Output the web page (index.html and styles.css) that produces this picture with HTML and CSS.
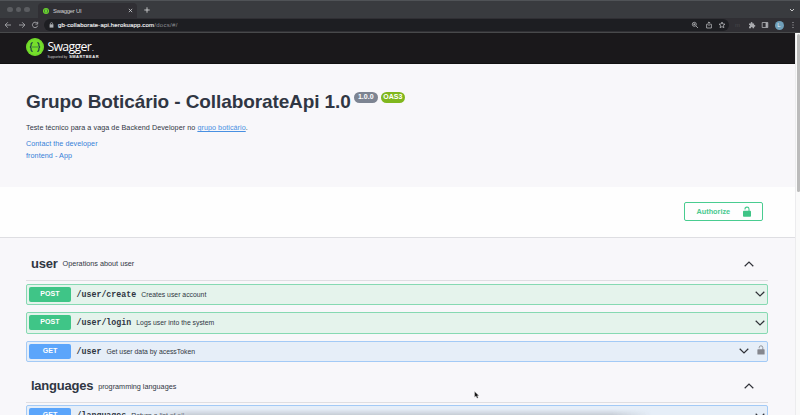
FILE: index.html
```html
<!DOCTYPE html>
<html lang="en">
<head>
<meta charset="utf-8">
<title>Swagger UI</title>
<link rel="stylesheet" href="styles.css">
</head>
<body>
<div class="tabs">
  <div class="lights"><i></i><i></i><i></i></div>
  <div class="tab">
    <svg class="favicon" viewBox="0 0 18 18"><circle cx="9" cy="9" r="9" fill="#6fd82c"/><path d="M7 4Q5 4 5 6.500Q5 9 3.500 9Q5 9 5 11.500Q5 14 7 14M11 4Q13 4 13 6.500Q13 9 14.500 9Q13 9 13 11.500Q13 14 11 14" fill="none" stroke="#173647" stroke-width="1.500"/></svg>
    <span>Swagger UI</span>
    <svg class="close" viewBox="0 0 6 6"><path d="M1 1L5 5M5 1L1 5" stroke="#dadbdd" stroke-width=".9"/></svg>
  </div>
  <svg class="plus" viewBox="0 0 6 6"><path d="M3 .3V5.700M.3 3H5.700" stroke="#d0d1d3" stroke-width=".9"/></svg>
  <svg class="tabmenu" viewBox="0 0 6 6"><path d="M1 2L3 4L5 2" fill="none" stroke="#c8c9cb"/></svg>
</div>
<div class="toolbar">
  <div class="nav">
    <svg viewBox="0 0 8 8"><path d="M7 4H1.300M3.800 1.300L1.100 4L3.800 6.700"/></svg>
    <svg viewBox="0 0 8 8"><path d="M1 4H6.700M4.200 1.300L6.900 4L4.200 6.700"/></svg>
    <svg viewBox="0 0 8 8"><path d="M6.200 2.200A2.700 2.700 0 1 0 6.700 4.700M6.700 .8V3.100H4.400"/></svg>
  </div>
  <div class="address">
    <svg class="secure" viewBox="0 0 5 6"><path d="M1.400 2.500V1.700a1.100 1.100 0 0 1 2.200 0v.8" fill="none" stroke="#aeb0b4" stroke-width=".7"/><path d="M.6 2.300H4.400V5.600H.6z" fill="#aeb0b4"/></svg>
    <span class="url"><b>gb-collaborate-api.herokuapp.com</b>/docs/#/</span>
    <div class="actions">
      <svg viewBox="0 0 8 8"><circle cx="3.300" cy="3.300" r="2"/><path d="M4.900 4.900L7 7M2.300 3.300H4.300M3.300 2.300V4.300"/></svg>
      <svg viewBox="0 0 8 8"><path d="M2.800 3.300H1.600V7H6.400V3.300H5.200M4 5V1M2.700 2.200L4 .9L5.300 2.200"/></svg>
      <svg viewBox="0 0 8 8"><path d="M4 1L4.800 3L7 3.200L5.400 4.600L5.900 6.700L4 5.600L2.100 6.700L2.600 4.600L1 3.200L3.200 3z"/></svg>
    </div>
  </div>
  <div class="extensions">
    <span class="dim">m</span>
    <svg viewBox="0 0 8 8"><path class="solid" d="M1 2.400H2.700V1.900a.9.900 0 0 1 1.800 0v.5H6.100V4h.4a.8.800 0 0 1 0 1.700h-.4V7.200H4.600V6.800a.8.800 0 0 0-1.600 0v.4H1V5.500h.5a.8.800 0 0 0 0-1.500H1z"/></svg>
    <svg viewBox="0 0 8 8"><path d="M1.200 1.500H6.800V6.500H1.200z"/><path class="solid" d="M4.600 1.500H6.800V6.500H4.600z"/></svg>
    <span class="avatar">L</span>
    <svg viewBox="0 0 8 8"><path class="solid" d="M3.500 1h1v1h-1zM3.500 3.500h1v1h-1zM3.500 6h1v1h-1z"/></svg>
  </div>
</div>
<div class="viewport">
  <main>
    <header class="topbar">
      <svg class="mark" viewBox="0 0 18 18"><circle cx="9" cy="9" r="9" fill="#75df2b"/><circle cx="9" cy="9" r="8.100" fill="none" stroke="#67c928" stroke-width=".5"/><path d="M6.800 4.800Q5 4.600 5.100 6.600Q5.200 9 3.800 9Q5.200 9 5.100 11.400Q5 13.400 6.800 13.200M11.200 4.800Q13 4.600 12.900 6.600Q12.800 9 14.200 9Q12.800 9 12.900 11.400Q13 13.400 11.200 13.200" fill="none" stroke="#173647" stroke-width="1.100"/><path d="M6.500 8.500h1v1h-1zM8.500 8.500h1v1h-1zM10.500 8.500h1v1h-1z" fill="#173647"/></svg>
      <div class="brand">
        <div class="brand-name">Swagger<small>.</small></div>
        <div class="support"><span>Supported by</span> <b>SMARTBEAR</b></div>
      </div>
    </header>
    <section class="info">
      <h1><span class="title-text">Grupo Boticário - CollaborateApi 1.0</span><span class="pill">1.0.0</span><span class="pill oas">OAS3</span></h1>
      <p class="description">Teste técnico para a vaga de Backend Developer no <a href="#">grupo boticário</a>.</p>
      <a class="link" href="#">Contact the developer</a>
      <a class="link" href="#">frontend - App</a>
    </section>
    <section class="auth">
      <button><span>Authorize</span><svg viewBox="0 0 10 12"><path d="M3 3.600V3.200a2 2 0 0 1 4-.2v2" fill="none" stroke="#49cc90" stroke-width="1.100"/><rect x="1" y="4.800" width="8" height="6" rx=".8" fill="#3fc486"/></svg></button>
    </section>
    <section class="operations">
      <div class="tag"><h2>user</h2><span>Operations about user</span><svg class="chev" viewBox="0 0 10 6"><path d="M.7 5.200L5 1L9.300 5.200"/></svg></div>
      <div class="op post"><b class="method">POST</b><code>/user/create</code><span>Creates user account</span><svg class="chev" viewBox="0 0 10 6"><path d="M.7 .8L5 5L9.300 .8"/></svg></div>
      <div class="op post"><b class="method">POST</b><code>/user/login</code><span>Logs user into the system</span><svg class="chev" viewBox="0 0 10 6"><path d="M.7 .8L5 5L9.300 .8"/></svg></div>
      <div class="op get"><b class="method">GET</b><code>/user</code><span>Get user data by acessToken</span><svg class="chev" viewBox="0 0 10 6"><path d="M.7 .8L5 5L9.300 .8"/></svg><svg class="lock" viewBox="0 0 8 10"><path d="M2.200 3.300V2.700a1.800 1.800 0 0 1 3.600-.2V5" fill="none" stroke="#909298"/><rect x=".4" y="4.200" width="7.200" height="5.400" rx=".6" fill="#85878e"/></svg></div>
      <div class="tag second"><h2>languages</h2><span>programming languages</span><svg class="chev" viewBox="0 0 10 6"><path d="M.7 5.200L5 1L9.300 5.200"/></svg></div>
      <div class="op get"><b class="method">GET</b><code>/languages</code><span>Return a list of all</span><svg class="chev" viewBox="0 0 10 6"><path d="M.7 .8L5 5L9.300 .8"/></svg></div>
    </section>
  </main>
  <div class="scroll"><i></i></div>
</div>
<div class="shade"></div>
<svg class="cursor" viewBox="0 0 6 8"><path d="M.6 .5V6.200L2 5L3 7.300L4.200 6.800L3.300 4.700H5z" fill="#111" stroke="#ddd" stroke-width=".4"/></svg>
</body>
</html>
```
FILE: styles.css
```css
* { box-sizing: border-box; }
body { margin: 0; width: 800px; height: 415px; overflow: hidden; position: relative; background: #f8f7fa; color: #303643; font-family: "Liberation Sans", Arial, sans-serif; }
svg { display: block; flex: none; }
span, b, code, a, h2 { white-space: nowrap; }

.tabs { display: flex; height: 18px; background: #393b3f; border-top: 1px solid #505357; padding-left: 7px; align-items: center; }
.lights { display: flex; gap: 3px; width: 31px; }
.lights i { width: 5.500px; height: 5.500px; border-radius: 50%; background: #5b5d61; }
.tab { display: flex; align-items: center; width: 99px; height: 15px; align-self: flex-end; padding: 0 4px 0 5px; background: #302f34; border-radius: 4px 4px 0 0; color: #d1d2d5; font-size: 5.900px; letter-spacing: -.25px; }
.favicon { width: 6px; height: 6px; margin-right: 4px; }
.close { width: 5px; height: 5px; margin-left: auto; }
.plus { width: 6px; height: 6px; margin-left: 7px; }
.tabmenu { width: 6px; height: 6px; margin: 0 5px 0 auto; }

.toolbar { display: flex; align-items: center; height: 15px; background: #302f34; border-bottom: 1px solid #48494b; padding-left: 4px; }
.toolbar svg { fill: none; stroke: #b5b6ba; stroke-width: .8; }
.nav { display: flex; gap: 5.500px; width: 40px; }
.nav svg { width: 8px; height: 8px; }
.address { display: flex; align-items: center; width: 685px; height: 12px; background: #1d1e22; border-radius: 6px; padding: 0 3px 0 5px; }
.address .secure { width: 5px; height: 6px; margin-right: 4px; stroke: none; }
.url { font-size: 6px; color: #8c8e93; letter-spacing: .3px; }
.url b { color: #f0f0f2; font-weight: 400; letter-spacing: .16px; -webkit-text-stroke: .15px #f0f0f2; }
.actions { display: flex; gap: 5.500px; margin-left: auto; }
.actions svg { width: 8px; height: 8px; }
.extensions { display: flex; align-items: center; gap: 5.500px; padding-left: 6px; }
.extensions svg { width: 8px; height: 8px; }
.toolbar .solid { fill: #aaabaf; stroke: none; }
.dim { width: 7px; font-size: 6px; color: #47484b; }
.avatar { width: 9px; height: 9px; border-radius: 50%; background: #6f9fb9; color: #e5edf1; font-size: 6px; line-height: 9px; text-align: center; }

.viewport { display: flex; height: 382px; }
main { width: 795px; }
.scroll { width: 5px; background: #fafafa; border-left: 1px solid #ececee; }
.scroll i { display: block; width: 3px; height: 158px; margin: 1px 0 0 1px; border-radius: 2px; background: #bbb; }

.topbar { display: flex; height: 31px; padding: 5px 0 0 26px; background: #1a181b; border-bottom: 1px solid #111; }
.mark { width: 18px; height: 18px; }
.brand { padding-left: 3.500px; color: #fff; }
.brand-name { height: 16px; font: 12.300px/18px "Open Sans", sans-serif; letter-spacing: -.7px; }
.brand-name small { font-size: 7px; margin-left: 1px; }
.support { display: flex; align-items: center; gap: 2px; height: 5px; font-size: 3.300px; color: #ccc; }
.support b { font-size: 4px; letter-spacing: .48px; color: #f5f5f5; }

.info { height: 123px; padding: 28px 0 0 26px; }
h1 { display: flex; margin: 0; height: 23px; font-size: 19px; line-height: 20px; }
.title-text { width: 327.500px; letter-spacing: -.1px; }
.pill { width: 24.500px; height: 10.500px; margin-right: 2.500px; border-radius: 6px; background: #7d8492; color: #fff; font-size: 7px; line-height: 10.500px; text-align: center; }
.oas { background: #80b71d; }
.description { margin: 8px 0 6px; font-size: 7.200px; line-height: 10px; letter-spacing: .055px; }
.description a { color: #4990e2; }
.link { display: block; width: max-content; margin-bottom: 2px; font-size: 7.200px; line-height: 10px; letter-spacing: .06px; color: #3580d8; text-decoration: none; }

.auth { display: flex; justify-content: flex-end; height: 51px; padding: 15px 32px 0 0; background: #fefefe; border-bottom: 1px solid #dedee2; }
.auth button { display: flex; align-items: center; width: 79px; height: 19px; padding: 0 10.500px 0 11.500px; border: 1px solid #49cc90; border-radius: 2px; background: transparent; color: #49c98e; font: bold 7.300px "Liberation Sans", Arial, sans-serif; }
.auth svg { width: 10px; height: 12px; margin-left: auto; }

.operations { padding: 11px 27px 0 26px; }
.tag { display: flex; align-items: center; height: 32px; margin-bottom: 2.500px; padding: 0 14px 2px 5px; border-bottom: 1px solid #dfdee2; font-size: 7.250px; }
.tag h2 { margin: 0 5px 0 0; font-size: 13px; line-height: 18px; letter-spacing: -.24px; }
.tag.second { height: 31px; margin-top: 9.500px; padding-bottom: 1px; }
.chev { width: 10px; height: 6px; margin-left: auto; fill: none; stroke: #303238; stroke-width: 1.200; }
.op { display: flex; align-items: center; height: 21.500px; margin-bottom: 7px; padding: 0 2.500px 0 2px; border: 1px solid; border-radius: 2px; font-size: 6.850px; }
.post { border-color: #86d9b2; background: #e5f3ec; }
.get { border-color: #a3caf6; background: #e6eef8; }
.method { width: 42px; height: 15px; margin-right: 5.500px; border-radius: 2px; color: #fff; font-size: 7.100px; line-height: 15px; text-align: center; }
.post .method { background: #3fc587; }
.get .method { background: #5ba5fb; }
.op code { margin-right: 5px; font: bold 8.300px "Liberation Mono", monospace; }
.lock { width: 8px; height: 10px; margin: -2px 0 0 8px; }
.shade { position: absolute; left: 148px; right: 148px; bottom: 0; height: 6px; background: linear-gradient(to right, #b7bcc400, #b7bcc4aa 8%, #b7bcc4aa 92%, #b7bcc400); -webkit-mask-image: linear-gradient(transparent, #000); }
.cursor { position: absolute; left: 474px; top: 391px; width: 6px; height: 8px; }
```
